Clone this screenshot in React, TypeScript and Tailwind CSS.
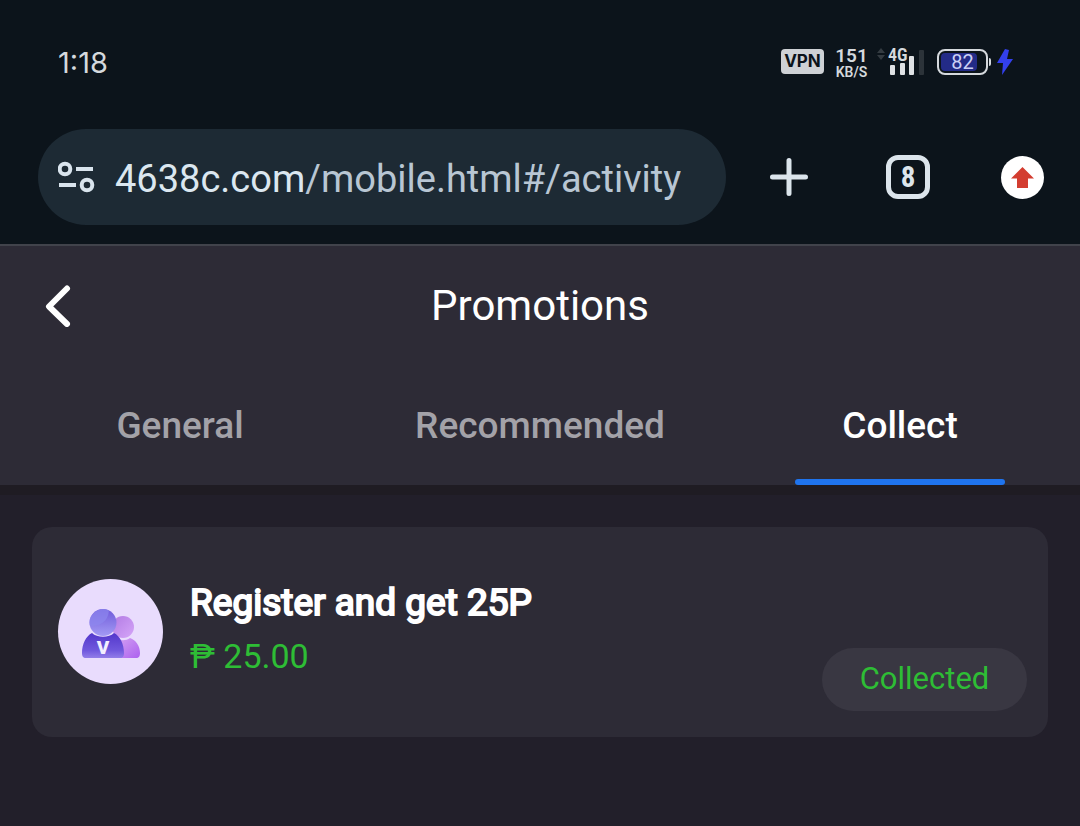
import { useState } from "react";
import clsx from "clsx";

const tabs = ["General", "Recommended", "Collect"];

const promotions = [
  { title: "Register and get 25P", amount: "25.00", status: "Collected" },
];

const SignalIcon = () => (
  <svg width="47" height="30" viewBox="0 0 47 30" aria-hidden="true">
    <path d="M4 1l4 5H0zM4 13l4-5H0z" fill="#343b41" />
    <rect x="13" y="18" width="5" height="10" rx="1" fill="#dfe2e5" />
    <rect x="23" y="16" width="5" height="12" rx="1" fill="#dfe2e5" />
    <rect x="32" y="9" width="5" height="19" rx="1" fill="#dfe2e5" />
    <rect x="42" y="3" width="5" height="25" rx="1" fill="#2c3339" />
  </svg>
);

const BoltIcon = () => (
  <svg width="16" height="26" viewBox="0 0 16 26" aria-hidden="true">
    <path d="M8 0L0 14h6l-1 12L16 10h-6l2-9z" fill="#3340ee" />
  </svg>
);

const StatusBar = () => (
  <div className="flex h-[125px] items-center justify-between pr-[67px] pl-[58px] text-[#d5d9dd]">
    <span className="font-['Inter',sans-serif] text-[29px] leading-8">
      1:18
    </span>
    <div className="flex items-center pb-0.5 font-['Inter',sans-serif]">
      <span className="flex h-[25px] w-[43px] items-center justify-center rounded-sm bg-[#ced1d5] text-[17px] font-bold text-[#0b131a]">
        VPN
      </span>
      <span className="ml-[11px] flex w-[33px] flex-col items-center pt-1 font-['Roboto',sans-serif] font-semibold">
        <span className="text-[19px] leading-4">151</span>
        <span className="text-sm leading-4">KB/S</span>
      </span>
      <span className="relative ml-[9px]">
        <SignalIcon />
        <span className="absolute top-0 left-[11px] font-['Roboto_Condensed','Liberation_Sans_Narrow',sans-serif] text-lg leading-4 font-semibold">
          4G
        </span>
      </span>
      <span className="relative ml-[13px] flex h-[26px] w-[51px] items-center rounded-lg border-2 border-[#d5d9dd] p-0.5">
        <span className="h-full w-9 rounded-sm bg-[#232b87]" />
        <span className="absolute inset-0 flex items-center justify-center font-['Roboto',sans-serif] text-xl text-[#cbd0f5]">
          82
        </span>
      </span>
      <span className="mr-1.5 ml-px h-2 w-0.5 rounded-r bg-[#d5d9dd]" />
      <BoltIcon />
    </div>
  </div>
);

const SiteSettingsIcon = () => (
  <svg
    width="37"
    height="32"
    viewBox="0 0 37 32"
    fill="none"
    stroke="#d9e4ed"
    strokeWidth="4"
    className="shrink-0"
    aria-hidden="true"
  >
    <circle cx="7" cy="8" r="5.300" />
    <path d="M18 8H35M1 24H18" />
    <circle cx="29" cy="24" r="5.300" />
  </svg>
);

const AddressBar = () => (
  <div className="flex h-[119px] items-start pt-1 pr-9 pl-[38px]">
    <button
      type="button"
      className="flex h-24 min-w-0 flex-1 items-center rounded-full bg-[#1d2a34] pl-5 text-left"
    >
      <SiteSettingsIcon />
      <span className="ml-5 truncate pt-1 text-[38px] leading-[48px] text-[#b8c6d3]">
        <span className="text-[#dbe7f0]">4638c.com</span>
        /mobile.html#/activity
      </span>
    </button>
    <div className="ml-11 flex h-24 items-center">
      <button type="button" aria-label="New tab">
        <svg
          width="38"
          height="38"
          viewBox="0 0 38 38"
          stroke="#dce5ec"
          strokeWidth="5"
          strokeLinecap="round"
        >
          <path d="M19 2.500v33M2.500 19h33" />
        </svg>
      </button>
      <button
        type="button"
        aria-label="Switch tabs"
        className="ml-[78px] flex size-11 items-center justify-center rounded-xl border-[5px] border-[#dce5ec] font-['Roboto_Condensed','Liberation_Sans_Narrow',Roboto,sans-serif] text-[29px] leading-8 font-bold text-[#dce5ec]"
      >
        8
      </button>
      <button type="button" aria-label="Update available" className="ml-[71px]">
        <svg width="43" height="43" viewBox="0 0 43 43">
          <circle cx="21.500" cy="21.500" r="21.500" fill="#fff" />
          <path d="M21.500 11L33 22.500h-6V32H16v-9.500h-6z" fill="#d33d30" />
        </svg>
      </button>
    </div>
  </div>
);

const MembersIcon = () => (
  <svg
    width="58"
    height="50"
    viewBox="0 0 58 50"
    className="mt-1"
    aria-hidden="true"
  >
    <defs>
      <linearGradient id="head" x1="0" y1="0" x2="0" y2="1">
        <stop offset="0" stopColor="#6f5ada" />
        <stop offset="1" stopColor="#a39af4" />
      </linearGradient>
      <linearGradient id="body" x1="0" y1="0" x2="0" y2="1">
        <stop offset="0" stopColor="#5337cb" />
        <stop offset="0.700" stopColor="#7058dd" />
        <stop offset="1" stopColor="#927de9" />
      </linearGradient>
      <linearGradient id="backHead" x1="0" y1="0" x2="1" y2="1">
        <stop offset="0" stopColor="#b27be3" />
        <stop offset="1" stopColor="#d5a5f8" />
      </linearGradient>
      <linearGradient id="backBody" x1="0" y1="0" x2="1" y2="1">
        <stop offset="0" stopColor="#d3a2f2" />
        <stop offset="1" stopColor="#ad61ef" />
      </linearGradient>
    </defs>
    <circle cx="41" cy="18" r="11" fill="url(#backHead)" />
    <path
      d="M34 49V29c4 3 10 3 14 0 6 2 10 8 10 15 0 3-1 5-4 5z"
      fill="url(#backBody)"
    />
    <path
      d="M10 24c5 5 17 5 22 0 6 3 10 11 10 20 0 3-1 5-4 5H4c-3 0-4-2-4-5 0-9 4-17 10-20z"
      fill="url(#body)"
    />
    <circle cx="21" cy="13.500" r="13.500" fill="url(#head)" />
    <path
      d="M27 1.500C26 13 18 17 8 17A13.500 13.500 0 0 1 27 1.500z"
      fill="#8d87ee"
      opacity="0.700"
    />
    <text
      x="21"
      y="45"
      textAnchor="middle"
      fill="#f3eeff"
      className="text-[19px] font-black"
    >
      V
    </text>
  </svg>
);

const PromotionCard = ({ title, amount, status }: (typeof promotions)[0]) => (
  <li className="flex h-[210px] rounded-[20px] bg-[#2d2b36] pt-[52px] pr-[21px] pb-[26px] pl-[26px]">
    <div className="flex size-[105px] shrink-0 items-center justify-center rounded-full bg-[#e9dcfd]">
      <MembersIcon />
    </div>
    <div className="ml-[27px] flex-1">
      <h2 className="text-[37px] leading-[48px] text-white [-webkit-text-stroke:2px_#fff]">
        {title}
      </h2>
      <p className="mt-[5px] text-[34px] leading-[48px] text-[#2ebd35]">
        ₱ {amount}
      </p>
    </div>
    <span className="flex h-[63px] w-[205px] items-center justify-center self-end rounded-full bg-[#393742] text-[31px] text-[#2ebd35]">
      {status}
    </span>
  </li>
);

const App = () => {
  const [active, setActive] = useState("Collect");

  return (
    <div className="flex min-h-screen flex-col bg-[#221f2a] font-['Roboto',sans-serif]">
      <div className="border-b-2 border-[#41434b] bg-[#0c141b]">
        <StatusBar />
        <AddressBar />
      </div>

      <header className="bg-[#2d2b36]">
        <div className="grid h-[120px] grid-cols-[1fr_auto_1fr] items-center px-[45px]">
          <button type="button" aria-label="Back">
            <svg
              width="26"
              height="42"
              viewBox="0 0 26 42"
              fill="none"
              stroke="#fff"
              strokeWidth="6"
              strokeLinecap="round"
              strokeLinejoin="round"
            >
              <path d="M22 3.500L4 21.500l18 17.500" />
            </svg>
          </button>
          <h1 className="text-[42px] leading-[48px] text-white">Promotions</h1>
        </div>
        <nav className="grid h-[119px] grid-cols-3">
          {tabs.map((tab) => (
            <button
              key={tab}
              type="button"
              onClick={() => setActive(tab)}
              className={clsx(
                "flex flex-col items-center justify-end text-[37px] leading-[48px] font-medium",
                active === tab ? "text-white" : "text-[#a3a2a8]"
              )}
            >
              {tab}
              <span
                className={clsx(
                  "mt-[29px] h-1.5 w-[210px] rounded-sm",
                  active === tab && "bg-[#1f74ee]"
                )}
              />
            </button>
          ))}
        </nav>
      </header>

      <main className="border-t-[10px] border-[#1f1c23] px-8 pt-8">
        <ul className="flex flex-col gap-6">
          {promotions.map((promotion) => (
            <PromotionCard key={promotion.title} {...promotion} />
          ))}
        </ul>
      </main>
    </div>
  );
};

export default App;
